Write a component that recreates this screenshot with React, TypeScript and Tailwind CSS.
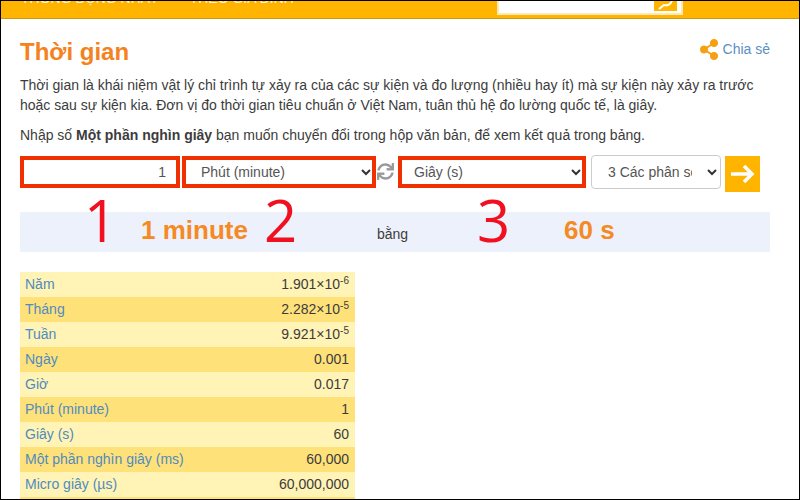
import { FaSync } from "react-icons/fa";

const rows: Array<{ label: string; value: string; exp?: string }> = [
  { label: "Năm", value: "1.901×10", exp: "-6" },
  { label: "Tháng", value: "2.282×10", exp: "-5" },
  { label: "Tuần", value: "9.921×10", exp: "-5" },
  { label: "Ngày", value: "0.001" },
  { label: "Giờ", value: "0.017" },
  { label: "Phút (minute)", value: "1" },
  { label: "Giây (s)", value: "60" },
  { label: "Một phần nghìn giây (ms)", value: "60,000" },
  { label: "Micro giây (µs)", value: "60,000,000" },
  { label: "Nano giây (ns)", value: "6×10" }
];

function Chevron() {
  return (
    <svg className="h-[8px] w-[10px] shrink-0" viewBox="0 0 10 8" fill="none" stroke="#333" strokeWidth="2">
      <path d="M1 2l4 4 4-4" />
    </svg>
  );
}

export default function App() {
  return (
    <div className="h-[500px] w-[800px] overflow-hidden border border-black bg-white font-['Liberation_Sans',sans-serif] text-[14px] text-[#3c3c3c]">
      <header className="flex h-[18px] items-end justify-between overflow-hidden border-b border-[#c99a10] bg-[#ffb400]">
        <nav className="mb-[10px] flex gap-[31px] pl-[20px] text-[14px] leading-[20px] text-[#fff3d0]">
          <span>THÔNG DỤNG NHẤT</span>
          <span>THEO GIA ĐÌNH</span>
        </nav>
        <div className="mr-[116px] mb-[3px] flex h-[20px] w-[186px] items-start justify-between border-[2px] border-t-0 border-[#fde9b5] bg-white">
          <span className="-mt-[10px] pl-[14px] text-[14px] leading-[20px] text-[#777]">Tìm kiếm</span>
          <span className="mt-[5px] mr-[4px] flex h-[11px] w-[23px] items-end justify-center overflow-hidden bg-[#ffb400]">
            <svg className="h-[11px] w-[23px]" viewBox="0 0 23 11" fill="none" stroke="#fff" strokeWidth="2">
              <path d="M5 9l5-4M9 5c4 1 8 0 9-5" />
            </svg>
          </span>
        </div>
      </header>

      <main className="relative px-[19px]">
        <div className="flex items-start justify-between pt-[19px]">
          <h1 className="text-[24px] leading-[28px] font-bold text-[#f58220]">Thời gian</h1>
          <a className="mt-[1px] mr-[10px] flex items-center gap-[5px] text-[14px] text-[#5a8fc5]">
            <svg className="h-[21px] w-[18px]" viewBox="0 0 18 21" fill="#f5a010" stroke="#f5a010">
              <circle cx="4" cy="10.5" r="3.6" />
              <circle cx="14" cy="4" r="3.6" />
              <circle cx="14" cy="17" r="3.6" />
              <path d="M4 10.5L14 4M4 10.5L14 17" strokeWidth="2" />
            </svg>
            Chia sẻ
          </a>
        </div>
        <p className="mt-[9px] text-[14px] leading-[20px]">
          Thời gian là khái niệm vật lý chỉ trình tự xảy ra của các sự kiện và đo lượng (nhiều hay ít) mà sự kiện này xảy ra trước
          hoặc sau sự kiện kia. Đơn vị đo thời gian tiêu chuẩn ở Việt Nam, tuân thủ hệ đo lường quốc tế, là giây.
        </p>
        <p className="mt-[10px] text-[14px] leading-[20px]">
          Nhập số <b>Một phần nghìn giây</b> bạn muốn chuyển đổi trong hộp văn bản, để xem kết quả trong bảng.
        </p>

        <div className="mt-[11px] flex items-start text-[14px] text-[#555]">
          <div className="flex h-[32px] w-[160px] items-center justify-end border-[4px] border-[#f03000] pr-[10px]">1</div>
          <div className="ml-[2px] flex h-[32px] w-[194px] items-center justify-between border-[4px] border-[#f03000] pr-[1px] pl-[15px]">
            <span>Phút (minute)</span>
            <Chevron />
          </div>
          <span className="mt-[7px] ml-[1px] flex w-[16px] justify-center overflow-visible">
            <FaSync size={17} className="shrink-0 text-[#999]" />
          </span>
          <div className="ml-[5px] flex h-[32px] w-[188px] items-center justify-between border-[4px] border-[#f03000] pr-[1px] pl-[12px]">
            <span>Giây (s)</span>
            <Chevron />
          </div>
          <div className="-mt-[1px] ml-[5px] flex h-[34px] w-[130px] items-center justify-between rounded-[4px] border border-[#ccc] pr-[3px] pl-[16px]">
            <span className="w-[84px] overflow-hidden whitespace-nowrap">3 Các phân số</span>
            <Chevron />
          </div>
          <div className="ml-[4px] flex h-[36px] w-[35px] items-center justify-center bg-[#ffb400]">
            <svg className="h-[22px] w-[24px]" viewBox="0 0 24 22" fill="none" stroke="#fff" strokeWidth="3.5">
              <path d="M0 11h21M13 3l8 8-8 8" />
            </svg>
          </div>
        </div>

        <div className="mt-[20px] mr-[10px] grid h-[40px] grid-cols-[121px_236px_187px_1fr] items-center bg-[#edf1fb]">
          <span />
          <span className="-mt-[4px] text-[26px] font-bold text-[#f58a24]">1 minute</span>
          <span className="pt-[4px] text-[14px]">bằng</span>
          <span className="-mt-[4px] text-[26px] font-bold text-[#f58a24]">60 s</span>
        </div>

        <table className="mt-[20px] w-[335px] text-[14px]">
          <tbody>
            {rows.map((r, i) => (
              <tr key={r.label} className={`h-[25px] ${i % 2 ? "bg-[#ffe17a]" : "bg-[#fff3b5]"}`}>
                <td className="pl-[5px] text-[#4f8bc0]">{r.label}</td>
                <td className="pr-[6px] text-right">
                  {r.value}
                  {r.exp && <sup className="text-[10px]">{r.exp}</sup>}
                </td>
              </tr>
            ))}
          </tbody>
        </table>

        <span className="absolute top-[166px] left-[83px] font-['Open_Sans',sans-serif] text-[58px] leading-[70px] text-[#f01020]">1</span>
        <span className="absolute top-[166px] left-[263px] font-['Open_Sans',sans-serif] text-[58px] leading-[70px] text-[#f01020]">2</span>
        <span className="absolute top-[166px] left-[476px] font-['Open_Sans',sans-serif] text-[58px] leading-[70px] text-[#f01020]">3</span>
      </main>
    </div>
  );
}
